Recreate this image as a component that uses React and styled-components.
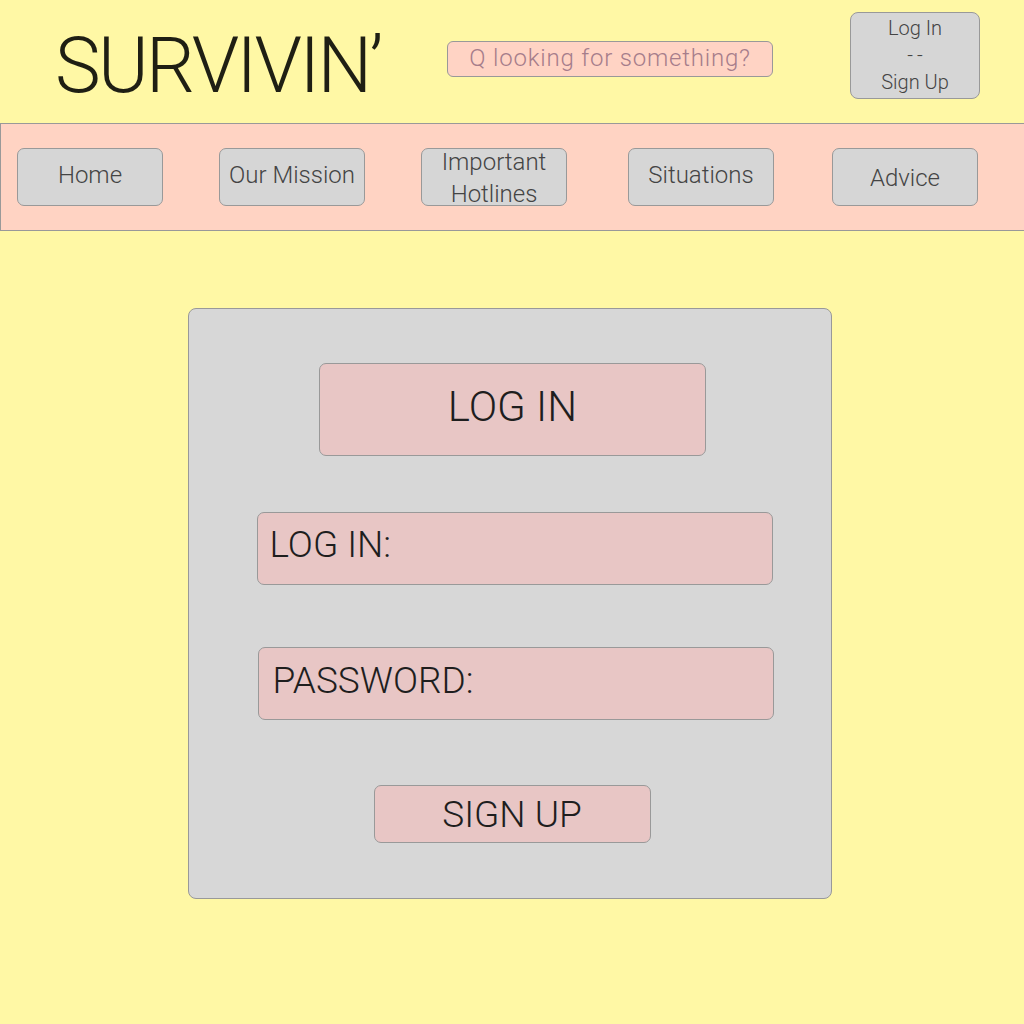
import React from "react";
import styled, { createGlobalStyle } from "styled-components";

const Global = createGlobalStyle`
  html, body { margin: 0; padding: 0; background: #fff8a5; }
  body { font-family: Roboto, "Liberation Sans", sans-serif; font-weight: 300; }
  * { box-sizing: border-box; }
`;

const Page = styled.div`
  width: 1024px;
  height: 1024px;
  background: #fff8a5;
  display: flex;
  flex-direction: column;
  overflow: hidden;
`;

const Header = styled.header`
  height: 123px;
  display: flex;
  align-items: flex-start;
`;

const Title = styled.h1`
  margin: 26px 0 0 55px;
  font-size: 77px;
  font-weight: 300;
  line-height: 80px;
  color: #1f1f14;
  letter-spacing: -2.6px;
  width: 392px;
`;

const Search = styled.div`
  margin-top: 41px;
  width: 326px;
  height: 36px;
  background: #ffd3c4;
  border: 1px solid #999;
  border-radius: 6px;
  display: flex;
  align-items: center;
  justify-content: center;
  color: #a67d8b;
  font-size: 24px;
  letter-spacing: 0.8px;
  padding-bottom: 3px;
`;

const AuthBox = styled.div`
  margin: 12px 0 0 77px;
  width: 130px;
  height: 87px;
  background: #d6d6d6;
  border: 1px solid #999;
  border-radius: 8px;
  display: flex;
  flex-direction: column;
  align-items: center;
  justify-content: center;
  color: #444;
  font-size: 20px;
  line-height: 27px;
`;

const Dashes = styled.span`
  letter-spacing: 4px;
  margin-right: -4px;
`;

const Nav = styled.nav`
  height: 108px;
  background: #ffd3c3;
  border: 1px solid #999;
  border-right: none;
  display: flex;
  align-items: flex-start;
  padding: 24px 0 0 16px;
`;

const NavButton = styled.div`
  width: 146px;
  height: 58px;
  margin-left: ${(p) => p.$gap || 0}px;
  background: #d6d6d6;
  border: 1px solid #999;
  border-radius: 7px;
  display: flex;
  align-items: center;
  justify-content: center;
  text-align: center;
  color: #444;
  font-size: 24px;
  line-height: 32px;
  padding-bottom: ${(p) => (p.$shift ? 0 : 4)}px;
  padding-top: ${(p) => p.$shift || 0}px;
`;

const Main = styled.main`
  display: flex;
  justify-content: center;
  padding: 77px 4px 0 0;
`;

const Card = styled.section`
  width: 644px;
  height: 591px;
  background: #d7d7d7;
  border: 1px solid #999;
  border-radius: 8px;
  display: flex;
  flex-direction: column;
  align-items: center;
  padding-top: 54px;
`;

const PinkBox = styled.div`
  background: #e8c6c5;
  border: 1px solid #999;
  border-radius: 7px;
  color: #1e1e1e;
  display: flex;
  align-items: center;
  width: ${(p) => p.$w}px;
  height: ${(p) => p.$h}px;
  margin-top: ${(p) => p.$mt || 0}px;
  margin-left: ${(p) => p.$ml || 0}px;
  justify-content: ${(p) => (p.$left ? "flex-start" : "center")};
  padding-left: ${(p) => p.$pl || 0}px;
  font-size: ${(p) => p.$fs}px;
  padding-bottom: ${(p) => p.$pb || 0}px;
`;

export default function App() {
  return (
    <Page>
      <Global />
      <Header>
        <Title>SURVIVIN’</Title>
        <Search>Q looking for something?</Search>
        <AuthBox>
          <span>Log In</span>
          <Dashes>--</Dashes>
          <span>Sign Up</span>
        </AuthBox>
      </Header>
      <Nav>
        <NavButton>Home</NavButton>
        <NavButton $gap={56}>Our Mission</NavButton>
        <NavButton $gap={56} $shift={2}>
          Important
          <br />
          Hotlines
        </NavButton>
        <NavButton $gap={61}>Situations</NavButton>
        <NavButton $gap={58} $shift={2}>Advice</NavButton>
      </Nav>
      <Main>
        <Card>
          <PinkBox $w={387} $h={93} $fs={42} $ml={5} $pb={6}>
            LOG IN
          </PinkBox>
          <PinkBox $w={516} $h={73} $mt={56} $fs={37} $left $pl={12} $pb={8} $ml={9}>
            LOG IN:
          </PinkBox>
          <PinkBox $w={516} $h={73} $mt={62} $fs={37} $left $pl={14} $pb={6} $ml={11}>
            PASSWORD:
          </PinkBox>
          <PinkBox $w={277} $h={58} $mt={65} $fs={37} $ml={4}>
            SIGN UP
          </PinkBox>
        </Card>
      </Main>
    </Page>
  );
}
